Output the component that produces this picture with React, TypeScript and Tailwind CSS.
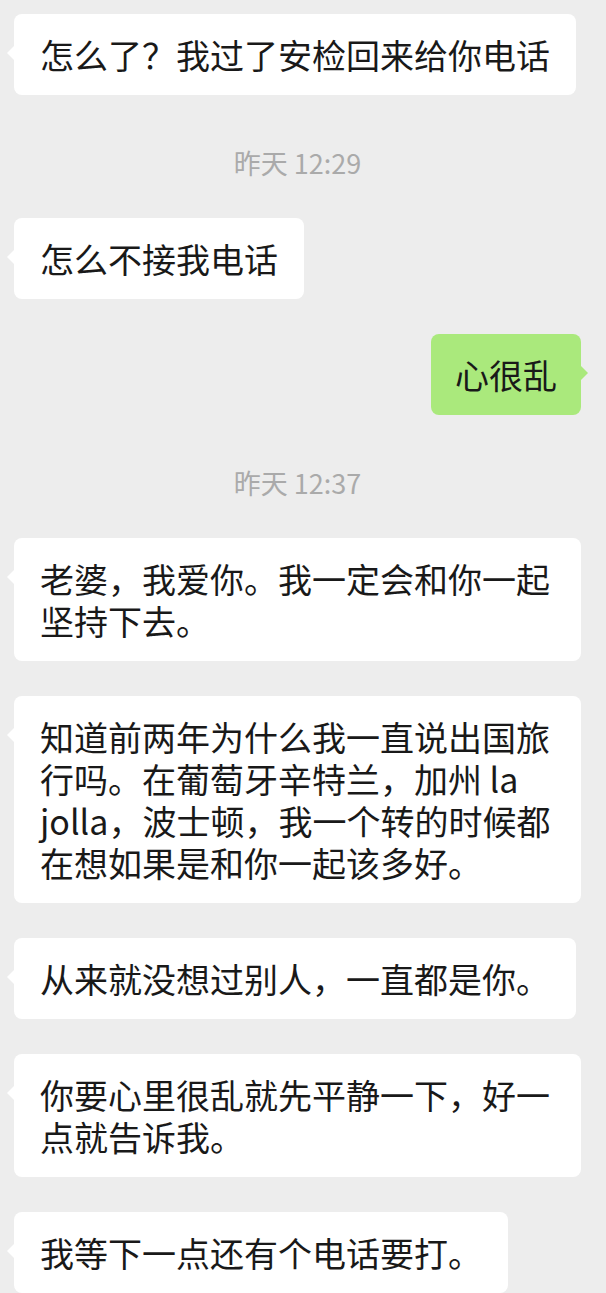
import React from 'react';

type Item =
  | { kind: 'time'; text: string }
  | { kind: 'msg'; from: 'them' | 'me'; text: string };

const items: Item[] = [
  { kind: 'msg', from: 'them', text: '怎么了？我过了安检回来给你电话' },
  { kind: 'time', text: '昨天 12:29' },
  { kind: 'msg', from: 'them', text: '怎么不接我电话' },
  { kind: 'msg', from: 'me', text: '心很乱' },
  { kind: 'time', text: '昨天 12:37' },
  { kind: 'msg', from: 'them', text: '老婆，我爱你。我一定会和你一起坚持下去。' },
  {
    kind: 'msg',
    from: 'them',
    text: '知道前两年为什么我一直说出国旅行吗。在葡萄牙辛特兰，加州 la jolla，波士顿，我一个转的时候都在想如果是和你一起该多好。',
  },
  { kind: 'msg', from: 'them', text: '从来就没想过别人，一直都是你。' },
  { kind: 'msg', from: 'them', text: '你要心里很乱就先平静一下，好一点就告诉我。' },
  { kind: 'msg', from: 'them', text: '我等下一点还有个电话要打。' },
];

const font = { fontFamily: '"Noto Sans CJK SC", "Noto Sans", sans-serif' };

function Bubble({ from, text }: { from: 'them' | 'me'; text: string }) {
  const mine = from === 'me';
  return (
    <div
      className={`relative max-w-[567px] rounded-[8px] py-[19.5px] text-[34px] leading-[42px] text-[#191919] ${
        mine ? 'self-end bg-[#aae97c] px-[24px]' : 'self-start bg-white px-[26px]'
      }`}
    >
      {mine ? (
        <span className="absolute right-[-7px] top-[32px] h-0 w-0 border-y-[7px] border-l-[7px] border-y-transparent border-l-[#aae97c]" />
      ) : (
        <span className="absolute left-[-7px] top-[32px] h-0 w-0 border-y-[7px] border-r-[7px] border-y-transparent border-r-white" />
      )}
      {text}
    </div>
  );
}

export default function App() {
  return (
    <div className="min-h-screen bg-[#ededed] pl-[14px] pr-[25px] pt-[14px] pb-[20px]" style={font}>
      <div className="flex flex-col">
        {items.map((item, i) =>
          item.kind === 'time' ? (
            <div
              key={i}
              className="mt-[53px] mb-[5px] text-center text-[27px] leading-[30px] text-[#aaaaaa]"
            >
              {item.text}
            </div>
          ) : (
            <div key={i} className="mt-[35px] flex flex-col first:mt-0">
              <Bubble from={item.from} text={item.text} />
            </div>
          )
        )}
      </div>
    </div>
  );
}
